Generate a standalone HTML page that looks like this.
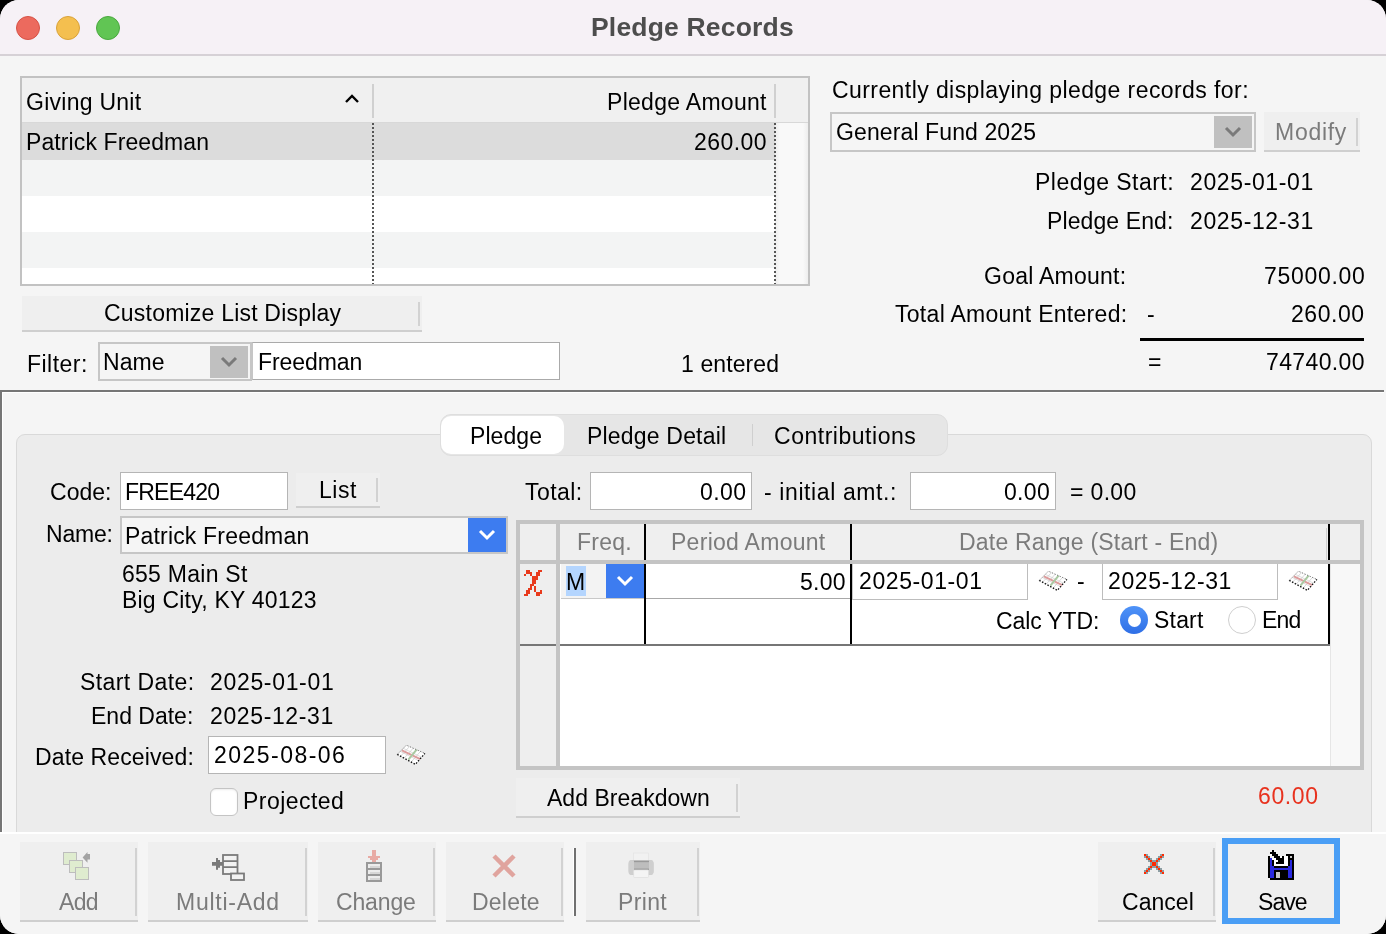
<!DOCTYPE html>
<html><head><meta charset="utf-8"><style>
html,body{margin:0;padding:0;}
body{width:1386px;height:934px;position:relative;overflow:hidden;background:#000;font-family:"Liberation Sans",sans-serif;color:#000;}
#win{position:absolute;left:0;top:0;width:1386px;height:934px;background:#f5f5f5;border-radius:19px;overflow:hidden;}
.t{position:absolute;font-size:23px;line-height:26px;white-space:nowrap;will-change:transform;}
</style></head><body>
<div id="win">
<div style="position:absolute;left:0px;top:0px;width:1386px;height:54px;background:#f6f1f6;"></div>
<div style="position:absolute;left:0px;top:54px;width:1386px;height:2px;background:#d6d1d6;"></div>
<div style="position:absolute;left:16px;top:16px;width:24px;height:24px;border-radius:50%;background:#ec6a5e;box-sizing:border-box;border:1px solid #d65246;"></div>
<div style="position:absolute;left:56px;top:16px;width:24px;height:24px;border-radius:50%;background:#f4bf4f;box-sizing:border-box;border:1px solid #d9a23a;"></div>
<div style="position:absolute;left:96px;top:16px;width:24px;height:24px;border-radius:50%;background:#61c554;box-sizing:border-box;border:1px solid #4aa83f;"></div>
<div class="t" style="top:13.5px;left:591.3px;letter-spacing:0.18px;color:#4d4d4d;font-size:26.5px;font-weight:bold;">Pledge Records</div>
<div style="position:absolute;left:20px;top:76px;width:790px;height:210px;box-sizing:border-box;border:2px solid #c2c2c2;background:#fff;"></div>
<div style="position:absolute;left:22px;top:78px;width:786px;height:45px;background:#f0f0f0;"></div>
<div style="position:absolute;left:22px;top:122px;width:786px;height:1px;background:#d8d8d8;"></div>
<div style="position:absolute;left:22px;top:123px;width:753px;height:37px;background:#dcdcdc;"></div>
<div style="position:absolute;left:22px;top:160px;width:753px;height:36px;background:#f3f4f4;"></div>
<div style="position:absolute;left:22px;top:196px;width:753px;height:36px;background:#ffffff;"></div>
<div style="position:absolute;left:22px;top:232px;width:753px;height:36px;background:#f3f4f4;"></div>
<div style="position:absolute;left:22px;top:268px;width:753px;height:16px;background:#ffffff;"></div>
<div style="position:absolute;left:775px;top:123px;width:33px;height:161px;background:linear-gradient(90deg,#ececec,#f9f9f9 5px,#f9f9f9 28px,#eeeeee);"></div>
<div style="position:absolute;left:372px;top:84px;width:2px;height:34px;background:#d0d0d0;"></div>
<div style="position:absolute;left:774px;top:84px;width:2px;height:34px;background:#d0d0d0;"></div>
<div style="position:absolute;left:372px;top:123px;width:2px;height:161px;background:repeating-linear-gradient(180deg,#555 0 2px,transparent 2px 4px);"></div>
<div style="position:absolute;left:774px;top:123px;width:2px;height:161px;background:repeating-linear-gradient(180deg,#555 0 2px,transparent 2px 4px);"></div>
<svg style="position:absolute;left:344px;top:93px" width="16" height="12"><path d="M2 9 L8 3 L14 9" fill="none" stroke="#000" stroke-width="2.4"/></svg>
<div class="t" style="top:89.0px;left:25.7px;letter-spacing:0.26px;">Giving Unit</div>
<div class="t" style="top:89.0px;left:607.2px;letter-spacing:0.29px;">Pledge Amount</div>
<div class="t" style="top:129.0px;left:25.8px;letter-spacing:0.10px;">Patrick Freedman</div>
<div class="t" style="top:129.0px;left:694.2px;letter-spacing:0.44px;">260.00</div>
<div style="position:absolute;left:22px;top:296px;width:400px;height:36px;background:#efefef;border-bottom:2px solid #cfcfcf;box-sizing:border-box;"></div>
<div style="position:absolute;left:418px;top:302px;width:2px;height:24px;background:#d2d2d2;"></div>
<div class="t" style="top:300.0px;left:103.5px;letter-spacing:0.21px;">Customize List Display</div>
<div class="t" style="top:351.0px;left:27.3px;letter-spacing:0.48px;">Filter:</div>
<div style="position:absolute;left:98px;top:342px;width:154px;height:39px;box-sizing:border-box;border:2px solid #c6c6c6;background:#f5f5f5;"></div>
<div style="position:absolute;left:210px;top:346px;width:38px;height:32px;background:#c0c0c0;"></div>
<svg style="position:absolute;left:220px;top:356px" width="18" height="12"><path d="M2 2 L9 9 L16 2" fill="none" stroke="#7a7a7a" stroke-width="3"/></svg>
<div class="t" style="top:349.0px;left:102.6px;letter-spacing:0.07px;">Name</div>
<div style="position:absolute;left:252px;top:342px;width:308px;height:38px;box-sizing:border-box;border:1px solid #aaaaaa;border-left-color:#c6c6c6;background:#fff;"></div>
<div class="t" style="top:348.9px;left:257.5px;letter-spacing:-0.07px;">Freedman</div>
<div class="t" style="top:351.0px;left:681.0px;letter-spacing:0.10px;">1 entered</div>
<div class="t" style="top:77.0px;left:832.0px;letter-spacing:0.42px;">Currently displaying pledge records for:</div>
<div style="position:absolute;left:830px;top:112px;width:426px;height:40px;box-sizing:border-box;border:2px solid #c6c6c6;background:#f5f5f5;"></div>
<div style="position:absolute;left:1214px;top:116px;width:38px;height:32px;background:#c0c0c0;"></div>
<svg style="position:absolute;left:1224px;top:126px" width="18" height="12"><path d="M2 2 L9 9 L16 2" fill="none" stroke="#7a7a7a" stroke-width="3"/></svg>
<div class="t" style="top:118.6px;left:835.9px;letter-spacing:0.11px;">General Fund 2025</div>
<div style="position:absolute;left:1264px;top:112px;width:96px;height:40px;background:#efefef;border-bottom:2px solid #cfcfcf;box-sizing:border-box;"></div>
<div style="position:absolute;left:1356px;top:118px;width:2px;height:28px;background:#d2d2d2;"></div>
<div class="t" style="top:119.0px;left:1275.0px;letter-spacing:0.72px;color:#7b7b7b;">Modify</div>
<div class="t" style="top:168.8px;left:1035.4px;letter-spacing:0.47px;">Pledge Start:</div>
<div class="t" style="top:168.8px;left:1190.0px;letter-spacing:0.62px;">2025-01-01</div>
<div class="t" style="top:208.4px;left:1047.0px;letter-spacing:0.10px;">Pledge End:</div>
<div class="t" style="top:208.4px;left:1190.0px;letter-spacing:0.62px;">2025-12-31</div>
<div class="t" style="top:263.0px;left:984.0px;letter-spacing:0.25px;">Goal Amount:</div>
<div class="t" style="top:262.6px;left:1263.8px;letter-spacing:0.69px;">75000.00</div>
<div class="t" style="top:300.6px;left:895.0px;letter-spacing:0.29px;">Total Amount Entered:</div>
<div class="t" style="top:300.6px;left:1146.5px;">-</div>
<div class="t" style="top:300.5px;left:1290.6px;letter-spacing:0.54px;">260.00</div>
<div style="position:absolute;left:1140px;top:338px;width:224px;height:2.5px;background:#000;"></div>
<div class="t" style="top:348.5px;left:1147.5px;">=</div>
<div class="t" style="top:348.5px;left:1265.7px;letter-spacing:0.37px;">74740.00</div>
<div style="position:absolute;left:0px;top:390px;width:1384px;height:442px;background:#f5f5f5;"></div>
<div style="position:absolute;left:0px;top:390px;width:1384px;height:2px;background:#767676;"></div>
<div style="position:absolute;left:0px;top:390px;width:2px;height:442px;background:#767676;"></div>
<div style="position:absolute;left:2px;top:392px;width:1382px;height:1px;background:#fff;"></div>
<div style="position:absolute;left:2px;top:392px;width:1px;height:440px;background:#fff;"></div>
<div style="position:absolute;left:16px;top:434px;width:1356px;height:420px;box-sizing:border-box;border:1px solid #d9d9d9;border-radius:9px;background:#ececec;"></div>
<div style="position:absolute;left:0px;top:832px;width:1386px;height:2px;background:#ffffff;"></div>
<div style="position:absolute;left:440px;top:414px;width:508px;height:42px;box-sizing:border-box;border:1px solid #dedede;border-radius:11px;background:#e6e6e6;"></div>
<div style="position:absolute;left:441px;top:416px;width:123px;height:38px;border-radius:10px;background:#ffffff;"></div>
<div style="position:absolute;left:751.5px;top:424px;width:1.5px;height:22px;background:#cfcfcf;"></div>
<div class="t" style="top:422.8px;left:469.7px;letter-spacing:0.06px;">Pledge</div>
<div class="t" style="top:423.0px;left:586.9px;letter-spacing:0.19px;">Pledge Detail</div>
<div class="t" style="top:423.0px;left:774.0px;letter-spacing:0.52px;">Contributions</div>
<div class="t" style="top:478.7px;left:49.9px;letter-spacing:0.03px;">Code:</div>
<div style="position:absolute;left:120px;top:472px;width:168px;height:38px;box-sizing:border-box;border:1px solid #b5b5b5;background:#fff;"></div>
<div class="t" style="top:479.0px;left:125.3px;letter-spacing:-0.78px;">FREE420</div>
<div style="position:absolute;left:296px;top:473px;width:84px;height:35px;background:#efefef;border-bottom:2px solid #cfcfcf;box-sizing:border-box;"></div>
<div style="position:absolute;left:376px;top:478px;width:2px;height:24px;background:#d2d2d2;"></div>
<div class="t" style="top:476.9px;left:319.4px;letter-spacing:0.53px;">List</div>
<div class="t" style="top:521.3px;left:45.6px;letter-spacing:-0.20px;">Name:</div>
<div style="position:absolute;left:120px;top:516px;width:388px;height:38px;box-sizing:border-box;border:2px solid #c6c6c6;background:#f5f5f5;"></div>
<div style="position:absolute;left:468px;top:518px;width:38px;height:34px;background:#3d7cf0;"></div>
<svg style="position:absolute;left:478px;top:528px" width="18" height="13"><path d="M2 3 L9 10 L16 3" fill="none" stroke="#fff" stroke-width="3"/></svg>
<div class="t" style="top:522.5px;left:125.3px;letter-spacing:0.18px;">Patrick Freedman</div>
<div class="t" style="top:560.7px;left:121.7px;letter-spacing:0.26px;">655 Main St</div>
<div class="t" style="top:586.9px;left:121.5px;letter-spacing:0.21px;">Big City, KY 40123</div>
<div class="t" style="top:668.6px;left:79.9px;letter-spacing:0.41px;">Start Date:</div>
<div class="t" style="top:668.6px;left:210.0px;letter-spacing:0.67px;">2025-01-01</div>
<div class="t" style="top:702.6px;left:91.0px;">End Date:</div>
<div class="t" style="top:702.6px;left:210.0px;letter-spacing:0.62px;">2025-12-31</div>
<div class="t" style="top:744.0px;left:35.4px;letter-spacing:0.12px;">Date Received:</div>
<div style="position:absolute;left:208px;top:736px;width:178px;height:38px;box-sizing:border-box;border:1px solid #b5b5b5;background:#fff;"></div>
<div class="t" style="top:742.0px;left:214.0px;letter-spacing:1.47px;">2025-08-06</div>
<svg style="position:absolute;left:392px;top:738px" width="40" height="32" viewBox="0 0 40 32"><polygon points="5.3,16.4 14.4,7.2 32.9,15.4 23.3,26.4" fill="#fff"/><path d="M8.3,13.4 L26.6,22.6 M11.3,10.3 L29.6,19.2" stroke="#d0d0d0" stroke-width="0.7"/><path d="M17.5,8.6 L8.6,18.2 M21.2,10.2 L12.2,20.2 M28.5,13.4 L19.2,24" stroke="#c8c8c8" stroke-width="0.7"/><path d="M9.9,12.3 L28.3,21.2" stroke="#dc9c9c" stroke-width="2"/><path d="M24.6,11.7 L16.4,21.6" stroke="#a9c9a2" stroke-width="2"/><path d="M5.3,16.4 L14.4,7.2 L32.9,15.4" fill="none" stroke="#666" stroke-width="0.9" stroke-dasharray="1.3 1.5"/><path d="M5.3,16.4 L23.3,26.4 L32.9,15.4" fill="none" stroke="#111" stroke-width="1.3" stroke-dasharray="1.5 1.6"/></svg>
<div style="position:absolute;left:210px;top:788px;width:28px;height:28px;box-sizing:border-box;border:1px solid #c4c4c4;border-radius:6px;background:#fff;box-shadow:inset 0 1px 2px rgba(0,0,0,0.08);"></div>
<div class="t" style="top:788.4px;left:243.4px;letter-spacing:0.45px;">Projected</div>
<div class="t" style="top:478.6px;left:524.9px;letter-spacing:0.42px;">Total:</div>
<div style="position:absolute;left:590px;top:472px;width:162px;height:38px;box-sizing:border-box;border:1px solid #b5b5b5;background:#fff;"></div>
<div class="t" style="top:478.6px;left:699.8px;letter-spacing:0.40px;">0.00</div>
<div class="t" style="top:478.6px;left:763.8px;letter-spacing:0.61px;">- initial amt.:</div>
<div style="position:absolute;left:910px;top:472px;width:146px;height:38px;box-sizing:border-box;border:1px solid #b5b5b5;background:#fff;"></div>
<div class="t" style="top:478.6px;left:1004.0px;letter-spacing:0.33px;">0.00</div>
<div class="t" style="top:478.6px;left:1069.7px;letter-spacing:0.34px;">= 0.00</div>
<div style="position:absolute;left:516px;top:520px;width:848px;height:250px;box-sizing:border-box;border:4px solid #c4c4c4;background:#fff;"></div>
<div style="position:absolute;left:520px;top:524px;width:36px;height:242px;background:#eeeeee;"></div>
<div style="position:absolute;left:556px;top:524px;width:4px;height:242px;background:#c4c4c4;"></div>
<div style="position:absolute;left:560px;top:524px;width:800px;height:36px;background:#efefef;"></div>
<div style="position:absolute;left:1330px;top:564px;width:30px;height:202px;background:#f8f8f8;border-left:1px solid #e6e6e6;box-sizing:border-box;"></div>
<div style="position:absolute;left:644px;top:524px;width:2px;height:122px;background:#000;"></div>
<div style="position:absolute;left:850px;top:524px;width:2px;height:122px;background:#000;"></div>
<div style="position:absolute;left:1328px;top:524px;width:2px;height:122px;background:#000;"></div>
<div style="position:absolute;left:1326px;top:528px;width:1px;height:32px;background:#cfcfcf;"></div>
<div style="position:absolute;left:520px;top:644px;width:810px;height:2px;background:#767676;"></div>
<div style="position:absolute;left:556px;top:524px;width:4px;height:242px;background:#c4c4c4;"></div>
<div style="position:absolute;left:520px;top:560px;width:840px;height:4px;background:#c4c4c4;"></div>
<div class="t" style="top:528.8px;left:577.3px;letter-spacing:0.23px;color:#7b7b7b;">Freq.</div>
<div class="t" style="top:528.6px;left:671.2px;letter-spacing:0.28px;color:#7b7b7b;">Period Amount</div>
<div class="t" style="top:528.6px;left:959.2px;letter-spacing:0.21px;color:#7b7b7b;">Date Range (Start - End)</div>
<svg style="position:absolute;left:524px;top:570px" width="18" height="26" shape-rendering="crispEdges" fill="#e83a1c"><rect x="2" y="0" width="2" height="2"/><rect x="4" y="0" width="2" height="2"/><rect x="14" y="0" width="2" height="2"/><rect x="16" y="0" width="2" height="2"/><rect x="2" y="2" width="2" height="2"/><rect x="4" y="2" width="2" height="2"/><rect x="6" y="2" width="2" height="2"/><rect x="12" y="2" width="2" height="2"/><rect x="14" y="2" width="2" height="2"/><rect x="0" y="4" width="2" height="2"/><rect x="6" y="4" width="2" height="2"/><rect x="12" y="4" width="2" height="2"/><rect x="14" y="4" width="2" height="2"/><rect x="8" y="6" width="2" height="2"/><rect x="10" y="6" width="2" height="2"/><rect x="12" y="6" width="2" height="2"/><rect x="8" y="8" width="2" height="2"/><rect x="10" y="8" width="2" height="2"/><rect x="12" y="8" width="2" height="2"/><rect x="8" y="10" width="2" height="2"/><rect x="10" y="10" width="2" height="2"/><rect x="8" y="12" width="2" height="2"/><rect x="10" y="12" width="2" height="2"/><rect x="6" y="14" width="2" height="2"/><rect x="8" y="14" width="2" height="2"/><rect x="6" y="16" width="2" height="2"/><rect x="10" y="16" width="2" height="2"/><rect x="4" y="18" width="2" height="2"/><rect x="6" y="18" width="2" height="2"/><rect x="10" y="18" width="2" height="2"/><rect x="2" y="20" width="2" height="2"/><rect x="4" y="20" width="2" height="2"/><rect x="10" y="20" width="2" height="2"/><rect x="16" y="20" width="2" height="2"/><rect x="2" y="22" width="2" height="2"/><rect x="4" y="22" width="2" height="2"/><rect x="12" y="22" width="2" height="2"/><rect x="14" y="22" width="2" height="2"/><rect x="16" y="22" width="2" height="2"/><rect x="0" y="24" width="2" height="2"/><rect x="2" y="24" width="2" height="2"/><rect x="12" y="24" width="2" height="2"/><rect x="14" y="24" width="2" height="2"/></svg>
<div style="position:absolute;left:561px;top:564px;width:83px;height:35px;background:#f3f3f3;border-bottom:1px solid #c8c8c8;box-sizing:border-box;"></div>
<div style="position:absolute;left:606px;top:564px;width:38px;height:34px;background:#3d7cf0;"></div>
<svg style="position:absolute;left:616px;top:574px" width="18" height="13"><path d="M2 3 L9 10 L16 3" fill="none" stroke="#fff" stroke-width="3"/></svg>
<div style="position:absolute;left:566px;top:566px;width:20px;height:30px;background:#b4d5fe;"></div>
<div class="t" style="top:568.5px;left:565.7px;">M</div>
<div style="position:absolute;left:646px;top:598px;width:204px;height:1px;background:#a8a8a8;"></div>
<div class="t" style="top:568.5px;left:800.0px;letter-spacing:0.27px;">5.00</div>
<div style="position:absolute;left:852px;top:564px;width:176px;height:36px;box-sizing:border-box;border:1px solid #bdbdbd;border-top:none;border-left-color:#c8c8c8;background:#fff;"></div>
<div class="t" style="top:568.3px;left:858.6px;letter-spacing:0.60px;">2025-01-01</div>
<svg style="position:absolute;left:1034px;top:564px" width="40" height="32" viewBox="0 0 40 32"><polygon points="5.3,16.4 14.4,7.2 32.9,15.4 23.3,26.4" fill="#fff"/><path d="M8.3,13.4 L26.6,22.6 M11.3,10.3 L29.6,19.2" stroke="#d0d0d0" stroke-width="0.7"/><path d="M17.5,8.6 L8.6,18.2 M21.2,10.2 L12.2,20.2 M28.5,13.4 L19.2,24" stroke="#c8c8c8" stroke-width="0.7"/><path d="M9.9,12.3 L28.3,21.2" stroke="#dc9c9c" stroke-width="2"/><path d="M24.6,11.7 L16.4,21.6" stroke="#a9c9a2" stroke-width="2"/><path d="M5.3,16.4 L14.4,7.2 L32.9,15.4" fill="none" stroke="#666" stroke-width="0.9" stroke-dasharray="1.3 1.5"/><path d="M5.3,16.4 L23.3,26.4 L32.9,15.4" fill="none" stroke="#111" stroke-width="1.3" stroke-dasharray="1.5 1.6"/></svg>
<div class="t" style="top:568.3px;left:1076.6px;">-</div>
<div style="position:absolute;left:1102px;top:564px;width:176px;height:36px;box-sizing:border-box;border:1px solid #bdbdbd;border-top:none;background:#fff;"></div>
<div class="t" style="top:568.3px;left:1108.0px;letter-spacing:0.64px;">2025-12-31</div>
<svg style="position:absolute;left:1284px;top:564px" width="40" height="32" viewBox="0 0 40 32"><polygon points="5.3,16.4 14.4,7.2 32.9,15.4 23.3,26.4" fill="#fff"/><path d="M8.3,13.4 L26.6,22.6 M11.3,10.3 L29.6,19.2" stroke="#d0d0d0" stroke-width="0.7"/><path d="M17.5,8.6 L8.6,18.2 M21.2,10.2 L12.2,20.2 M28.5,13.4 L19.2,24" stroke="#c8c8c8" stroke-width="0.7"/><path d="M9.9,12.3 L28.3,21.2" stroke="#dc9c9c" stroke-width="2"/><path d="M24.6,11.7 L16.4,21.6" stroke="#a9c9a2" stroke-width="2"/><path d="M5.3,16.4 L14.4,7.2 L32.9,15.4" fill="none" stroke="#666" stroke-width="0.9" stroke-dasharray="1.3 1.5"/><path d="M5.3,16.4 L23.3,26.4 L32.9,15.4" fill="none" stroke="#111" stroke-width="1.3" stroke-dasharray="1.5 1.6"/></svg>
<div class="t" style="top:608.1px;left:996.3px;letter-spacing:-0.12px;">Calc YTD:</div>
<div style="position:absolute;left:1120px;top:606px;width:28px;height:28px;border-radius:50%;background:linear-gradient(180deg,#4f93f8,#2f6fe6);"></div>
<div style="position:absolute;left:1127.5px;top:613.5px;width:13px;height:13px;border-radius:50%;background:#fff;"></div>
<div class="t" style="top:607.0px;left:1154.2px;letter-spacing:0.20px;">Start</div>
<div style="position:absolute;left:1228px;top:606px;width:28px;height:28px;border-radius:50%;background:#fff;box-sizing:border-box;border:1px solid #cfcfcf;"></div>
<div class="t" style="top:607.0px;left:1261.7px;letter-spacing:-0.85px;">End</div>
<div style="position:absolute;left:516px;top:778px;width:224px;height:40px;background:#efefef;border-bottom:2px solid #cfcfcf;box-sizing:border-box;"></div>
<div style="position:absolute;left:736px;top:784px;width:2px;height:28px;background:#d2d2d2;"></div>
<div class="t" style="top:784.7px;left:547.2px;letter-spacing:0.03px;">Add Breakdown</div>
<div class="t" style="top:783.2px;left:1258.1px;letter-spacing:0.62px;color:#e8321e;">60.00</div>
<div style="position:absolute;left:0px;top:834px;width:1386px;height:100px;background:#f5f5f5;"></div>
<div style="position:absolute;left:20px;top:842px;width:118px;height:80px;background:#efefef;border-bottom:2px solid #cfcfcf;box-sizing:border-box;"></div>
<div style="position:absolute;left:135px;top:848px;width:2px;height:68px;background:#d2d2d2;"></div>
<div style="position:absolute;left:148px;top:842px;width:160px;height:80px;background:#efefef;border-bottom:2px solid #cfcfcf;box-sizing:border-box;"></div>
<div style="position:absolute;left:305px;top:848px;width:2px;height:68px;background:#d2d2d2;"></div>
<div style="position:absolute;left:318px;top:842px;width:118px;height:80px;background:#efefef;border-bottom:2px solid #cfcfcf;box-sizing:border-box;"></div>
<div style="position:absolute;left:433px;top:848px;width:2px;height:68px;background:#d2d2d2;"></div>
<div style="position:absolute;left:446px;top:842px;width:118px;height:80px;background:#efefef;border-bottom:2px solid #cfcfcf;box-sizing:border-box;"></div>
<div style="position:absolute;left:561px;top:848px;width:2px;height:68px;background:#d2d2d2;"></div>
<div style="position:absolute;left:586px;top:842px;width:114px;height:80px;background:#efefef;border-bottom:2px solid #cfcfcf;box-sizing:border-box;"></div>
<div style="position:absolute;left:697px;top:848px;width:2px;height:68px;background:#d2d2d2;"></div>
<div style="position:absolute;left:1098px;top:842px;width:118px;height:80px;background:#efefef;border-bottom:2px solid #cfcfcf;box-sizing:border-box;"></div>
<div style="position:absolute;left:1213px;top:848px;width:2px;height:68px;background:#d2d2d2;"></div>
<div style="position:absolute;left:573px;top:848px;width:1px;height:68px;background:#fff;"></div>
<div style="position:absolute;left:574px;top:848px;width:2px;height:68px;background:#707070;"></div>
<div style="position:absolute;left:1222px;top:838px;width:118px;height:86px;box-sizing:border-box;border:6px solid #4a9ef5;background:#efefef;"></div>
<div class="t" style="top:888.6px;left:59.0px;letter-spacing:-0.65px;color:#7b7b7b;">Add</div>
<div class="t" style="top:889.0px;left:175.7px;letter-spacing:0.75px;color:#7b7b7b;">Multi-Add</div>
<div class="t" style="top:889.0px;left:336.0px;letter-spacing:-0.14px;color:#7b7b7b;">Change</div>
<div class="t" style="top:889.0px;left:471.6px;letter-spacing:0.22px;color:#7b7b7b;">Delete</div>
<div class="t" style="top:889.0px;left:617.6px;letter-spacing:0.35px;color:#7b7b7b;">Print</div>
<div class="t" style="top:888.8px;left:1122.0px;letter-spacing:0.04px;">Cancel</div>
<div class="t" style="top:888.6px;left:1258.0px;letter-spacing:-0.93px;">Save</div>
<svg style="position:absolute;left:60px;top:850px" width="34" height="34" viewBox="0 0 34 34"><rect x="3.5" y="2.5" width="13" height="12" fill="#dfeccf" stroke="#bdbdbd"/><rect x="9.5" y="10.5" width="13" height="12" fill="#dfeccf" stroke="#bdbdbd"/><rect x="15.5" y="17.5" width="13" height="12" fill="#dfeccf" stroke="#bdbdbd"/><path d="M22.6 7.4 L27.5 2.1 L27.5 4.1 L30 4.1 L30 9.6 L27.5 9.6 L27.5 12.7 Z" fill="#a3a3a3"/></svg>
<svg style="position:absolute;left:210px;top:852px" width="36" height="30" viewBox="0 0 36 30"><rect x="13" y="3" width="14.5" height="19" fill="#f2f2f2" stroke="#7a7a7a" stroke-width="1.8"/><path d="M13 9.2 H27.5 M13 15.2 H27.5" stroke="#7a7a7a" stroke-width="1.8"/><rect x="21" y="21.5" width="13" height="6.5" fill="#f2f2f2" stroke="#7a7a7a" stroke-width="1.8"/><path d="M2 10 H6 V6 H8 V8 H10 V10 H13 V13.8 H10 V15.8 H8 V17.8 H6 V13.8 H2 Z" fill="#7a7a7a"/></svg>
<svg style="position:absolute;left:364px;top:848px" width="20" height="36" viewBox="0 0 20 36" shape-rendering="crispEdges"><rect x="2" y="14" width="16" height="20" fill="#999"/><rect x="4" y="16" width="12" height="4" fill="#ececec"/><rect x="6" y="18" width="10" height="2" fill="#d6d6d6"/><rect x="4" y="22" width="12" height="4" fill="#ececec"/><rect x="6" y="24" width="10" height="2" fill="#d6d6d6"/><rect x="4" y="28" width="12" height="4" fill="#ececec"/><rect x="6" y="30" width="10" height="2" fill="#d6d6d6"/><rect x="8" y="2" width="4" height="12" fill="#e8aaa4"/><rect x="4" y="8" width="12" height="2" fill="#e8aaa4"/><rect x="6" y="10" width="8" height="2" fill="#e8aaa4"/></svg>
<svg style="position:absolute;left:490px;top:852px" width="28" height="28" viewBox="0 0 28 28"><path d="M4 4 L24 24 M24 4 L4 24" stroke="#e0a49e" stroke-width="4.5"/></svg>
<svg style="position:absolute;left:626px;top:850px" width="30" height="30" viewBox="0 0 30 30"><rect x="7.6" y="3" width="15" height="8.5" fill="#f1f1f1" stroke="#e2e2e2" stroke-width="0.6"/><rect x="2.6" y="10" width="25" height="15" rx="4" fill="#c9c9c9"/><rect x="2.6" y="10" width="5.5" height="15" rx="3" fill="#cfcfcf"/><rect x="22" y="10" width="5.5" height="15" rx="3" fill="#cfcfcf"/><rect x="8" y="10.8" width="15" height="1.7" fill="#9a9a9a"/><rect x="8" y="12.5" width="15" height="5.9" fill="#bdbdbd"/><rect x="8" y="18.4" width="15" height="1.6" fill="#a0a0a0"/><rect x="7.6" y="20" width="15" height="7.5" rx="1" fill="#f4f4f4" stroke="#dcdcdc" stroke-width="0.6"/></svg>
<svg style="position:absolute;left:1144px;top:854px" width="20" height="20" shape-rendering="crispEdges"><rect x="6" y="8" width="2" height="2" fill="#8d9ea3"/><rect x="8" y="6" width="2" height="2" fill="#8d9ea3"/><rect x="6" y="14" width="2" height="2" fill="#8d9ea3"/><rect x="8" y="12" width="2" height="2" fill="#8d9ea3"/><rect x="16" y="0" width="2" height="2" fill="#8d9ea3"/><rect x="16" y="18" width="2" height="2" fill="#8d9ea3"/><rect x="18" y="16" width="2" height="2" fill="#8d9ea3"/><rect x="2" y="0" width="2" height="2" fill="#8d9ea3"/><rect x="0" y="16" width="2" height="2" fill="#8d9ea3"/><rect x="2" y="18" width="2" height="2" fill="#8d9ea3"/><rect x="4" y="16" width="2" height="2" fill="#8d9ea3"/><rect x="12" y="4" width="2" height="2" fill="#8d9ea3"/><rect x="14" y="2" width="2" height="2" fill="#8d9ea3"/><rect x="12" y="10" width="2" height="2" fill="#8d9ea3"/><rect x="10" y="12" width="2" height="2" fill="#8d9ea3"/><rect x="10" y="6" width="2" height="2" fill="#8d9ea3"/><rect x="16" y="4" width="2" height="2" fill="#8d9ea3"/><rect x="18" y="2" width="2" height="2" fill="#8d9ea3"/><rect x="0" y="2" width="2" height="2" fill="#8d9ea3"/><rect x="2" y="4" width="2" height="2" fill="#8d9ea3"/><rect x="4" y="2" width="2" height="2" fill="#8d9ea3"/><rect x="12" y="8" width="2" height="2" fill="#8d9ea3"/><rect x="14" y="6" width="2" height="2" fill="#8d9ea3"/><rect x="12" y="14" width="2" height="2" fill="#8d9ea3"/><rect x="14" y="12" width="2" height="2" fill="#8d9ea3"/><rect x="6" y="4" width="2" height="2" fill="#8d9ea3"/><rect x="6" y="10" width="2" height="2" fill="#8d9ea3"/><rect x="16" y="14" width="2" height="2" fill="#8d9ea3"/><rect x="4" y="6" width="2" height="2" fill="#8d9ea3"/><rect x="2" y="14" width="2" height="2" fill="#8d9ea3"/><rect x="4" y="12" width="2" height="2" fill="#8d9ea3"/><rect x="14" y="16" width="2" height="2" fill="#8d9ea3"/><rect x="0" y="0" width="2" height="2" fill="#ff2a00"/><rect x="18" y="0" width="2" height="2" fill="#ff2a00"/><rect x="0" y="18" width="2" height="2" fill="#ff2a00"/><rect x="18" y="18" width="2" height="2" fill="#ff2a00"/><rect x="2" y="2" width="2" height="2" fill="#ff2a00"/><rect x="16" y="2" width="2" height="2" fill="#ff2a00"/><rect x="2" y="16" width="2" height="2" fill="#ff2a00"/><rect x="16" y="16" width="2" height="2" fill="#ff2a00"/><rect x="4" y="4" width="2" height="2" fill="#ff2a00"/><rect x="14" y="4" width="2" height="2" fill="#ff2a00"/><rect x="4" y="14" width="2" height="2" fill="#ff2a00"/><rect x="14" y="14" width="2" height="2" fill="#ff2a00"/><rect x="6" y="6" width="2" height="2" fill="#ff2a00"/><rect x="12" y="6" width="2" height="2" fill="#ff2a00"/><rect x="6" y="12" width="2" height="2" fill="#ff2a00"/><rect x="12" y="12" width="2" height="2" fill="#ff2a00"/><rect x="8" y="8" width="2" height="2" fill="#ff2a00"/><rect x="10" y="8" width="2" height="2" fill="#ff2a00"/><rect x="8" y="10" width="2" height="2" fill="#ff2a00"/><rect x="10" y="10" width="2" height="2" fill="#ff2a00"/></svg>
<svg style="position:absolute;left:1266px;top:850px" width="28" height="30" shape-rendering="crispEdges"><rect x="2" y="6" width="2" height="2" fill="#000"/><rect x="2" y="8" width="2" height="2" fill="#000"/><rect x="2" y="10" width="2" height="2" fill="#000"/><rect x="2" y="12" width="2" height="2" fill="#000"/><rect x="2" y="14" width="2" height="2" fill="#000"/><rect x="2" y="16" width="2" height="2" fill="#000"/><rect x="2" y="18" width="2" height="2" fill="#000"/><rect x="2" y="20" width="2" height="2" fill="#000"/><rect x="2" y="22" width="2" height="2" fill="#000"/><rect x="2" y="24" width="2" height="2" fill="#000"/><rect x="2" y="26" width="2" height="2" fill="#000"/><rect x="4" y="8" width="2" height="2" fill="#2a2ae0"/><rect x="4" y="10" width="2" height="2" fill="#2a2ae0"/><rect x="4" y="12" width="2" height="2" fill="#2a2ae0"/><rect x="4" y="14" width="2" height="2" fill="#2a2ae0"/><rect x="4" y="16" width="2" height="2" fill="#2a2ae0"/><rect x="4" y="18" width="2" height="2" fill="#2a2ae0"/><rect x="4" y="20" width="2" height="2" fill="#2a2ae0"/><rect x="4" y="22" width="2" height="2" fill="#2a2ae0"/><rect x="4" y="24" width="2" height="2" fill="#2a2ae0"/><rect x="4" y="26" width="2" height="2" fill="#2a2ae0"/><rect x="6" y="16" width="2" height="2" fill="#2a2ae0"/><rect x="6" y="18" width="2" height="2" fill="#2a2ae0"/><rect x="6" y="20" width="2" height="2" fill="#2a2ae0"/><rect x="6" y="22" width="2" height="2" fill="#2a2ae0"/><rect x="6" y="24" width="2" height="2" fill="#2a2ae0"/><rect x="6" y="26" width="2" height="2" fill="#2a2ae0"/><rect x="6" y="10" width="2" height="2" fill="#000"/><rect x="6" y="12" width="2" height="2" fill="#000"/><rect x="6" y="14" width="2" height="2" fill="#000"/><rect x="6" y="8" width="2" height="2" fill="#fff"/><rect x="4" y="28" width="2" height="2" fill="#000"/><rect x="6" y="28" width="2" height="2" fill="#000"/><rect x="8" y="28" width="2" height="2" fill="#000"/><rect x="10" y="28" width="2" height="2" fill="#000"/><rect x="12" y="28" width="2" height="2" fill="#000"/><rect x="14" y="28" width="2" height="2" fill="#000"/><rect x="16" y="28" width="2" height="2" fill="#000"/><rect x="18" y="28" width="2" height="2" fill="#000"/><rect x="20" y="28" width="2" height="2" fill="#000"/><rect x="22" y="28" width="2" height="2" fill="#000"/><rect x="24" y="28" width="2" height="2" fill="#000"/><rect x="26" y="28" width="2" height="2" fill="#000"/><rect x="26" y="4" width="2" height="2" fill="#000"/><rect x="26" y="6" width="2" height="2" fill="#000"/><rect x="26" y="8" width="2" height="2" fill="#000"/><rect x="26" y="10" width="2" height="2" fill="#000"/><rect x="26" y="12" width="2" height="2" fill="#000"/><rect x="26" y="14" width="2" height="2" fill="#000"/><rect x="26" y="16" width="2" height="2" fill="#000"/><rect x="26" y="18" width="2" height="2" fill="#000"/><rect x="26" y="20" width="2" height="2" fill="#000"/><rect x="26" y="22" width="2" height="2" fill="#000"/><rect x="26" y="24" width="2" height="2" fill="#000"/><rect x="26" y="26" width="2" height="2" fill="#000"/><rect x="22" y="10" width="2" height="2" fill="#000"/><rect x="24" y="10" width="2" height="2" fill="#2a2ae0"/><rect x="22" y="12" width="2" height="2" fill="#000"/><rect x="24" y="12" width="2" height="2" fill="#2a2ae0"/><rect x="22" y="14" width="2" height="2" fill="#000"/><rect x="24" y="14" width="2" height="2" fill="#2a2ae0"/><rect x="22" y="16" width="2" height="2" fill="#2a2ae0"/><rect x="24" y="16" width="2" height="2" fill="#2a2ae0"/><rect x="22" y="18" width="2" height="2" fill="#2a2ae0"/><rect x="24" y="18" width="2" height="2" fill="#2a2ae0"/><rect x="22" y="20" width="2" height="2" fill="#2a2ae0"/><rect x="24" y="20" width="2" height="2" fill="#2a2ae0"/><rect x="22" y="22" width="2" height="2" fill="#2a2ae0"/><rect x="24" y="22" width="2" height="2" fill="#2a2ae0"/><rect x="22" y="24" width="2" height="2" fill="#2a2ae0"/><rect x="24" y="24" width="2" height="2" fill="#2a2ae0"/><rect x="22" y="26" width="2" height="2" fill="#2a2ae0"/><rect x="24" y="26" width="2" height="2" fill="#2a2ae0"/><rect x="20" y="4" width="2" height="2" fill="#000"/><rect x="22" y="4" width="2" height="2" fill="#000"/><rect x="24" y="4" width="2" height="2" fill="#000"/><rect x="22" y="6" width="2" height="2" fill="#000"/><rect x="22" y="8" width="2" height="2" fill="#000"/><rect x="24" y="6" width="2" height="2" fill="#c8c8c8"/><rect x="24" y="8" width="2" height="2" fill="#000"/><rect x="8" y="6" width="2" height="2" fill="#000"/><rect x="8" y="8" width="2" height="2" fill="#fff"/><rect x="8" y="10" width="2" height="2" fill="#fff"/><rect x="8" y="12" width="2" height="2" fill="#fff"/><rect x="8" y="14" width="2" height="2" fill="#fff"/><rect x="10" y="6" width="2" height="2" fill="#000"/><rect x="10" y="8" width="2" height="2" fill="#000"/><rect x="10" y="10" width="2" height="2" fill="#fff"/><rect x="10" y="12" width="2" height="2" fill="#000"/><rect x="10" y="14" width="2" height="2" fill="#fff"/><rect x="12" y="6" width="2" height="2" fill="#000"/><rect x="12" y="8" width="2" height="2" fill="#000"/><rect x="12" y="10" width="2" height="2" fill="#000"/><rect x="12" y="12" width="2" height="2" fill="#000"/><rect x="12" y="14" width="2" height="2" fill="#fff"/><rect x="14" y="6" width="2" height="2" fill="#fff"/><rect x="14" y="8" width="2" height="2" fill="#000"/><rect x="14" y="10" width="2" height="2" fill="#000"/><rect x="14" y="12" width="2" height="2" fill="#000"/><rect x="14" y="14" width="2" height="2" fill="#fff"/><rect x="16" y="6" width="2" height="2" fill="#000"/><rect x="16" y="8" width="2" height="2" fill="#000"/><rect x="16" y="10" width="2" height="2" fill="#000"/><rect x="16" y="12" width="2" height="2" fill="#000"/><rect x="16" y="14" width="2" height="2" fill="#fff"/><rect x="18" y="6" width="2" height="2" fill="#fff"/><rect x="18" y="8" width="2" height="2" fill="#fff"/><rect x="18" y="10" width="2" height="2" fill="#fff"/><rect x="18" y="12" width="2" height="2" fill="#fff"/><rect x="18" y="14" width="2" height="2" fill="#fff"/><rect x="20" y="6" width="2" height="2" fill="#fff"/><rect x="20" y="8" width="2" height="2" fill="#fff"/><rect x="20" y="10" width="2" height="2" fill="#fff"/><rect x="20" y="12" width="2" height="2" fill="#fff"/><rect x="20" y="14" width="2" height="2" fill="#fff"/><rect x="8" y="16" width="2" height="2" fill="#000"/><rect x="8" y="18" width="2" height="2" fill="#2a2ae0"/><rect x="8" y="20" width="2" height="2" fill="#000"/><rect x="8" y="22" width="2" height="2" fill="#000"/><rect x="8" y="24" width="2" height="2" fill="#000"/><rect x="8" y="26" width="2" height="2" fill="#000"/><rect x="10" y="16" width="2" height="2" fill="#000"/><rect x="10" y="18" width="2" height="2" fill="#2a2ae0"/><rect x="10" y="20" width="2" height="2" fill="#000"/><rect x="10" y="22" width="2" height="2" fill="#c8c8c8"/><rect x="10" y="24" width="2" height="2" fill="#c8c8c8"/><rect x="10" y="26" width="2" height="2" fill="#c8c8c8"/><rect x="12" y="16" width="2" height="2" fill="#000"/><rect x="12" y="18" width="2" height="2" fill="#2a2ae0"/><rect x="12" y="20" width="2" height="2" fill="#000"/><rect x="12" y="22" width="2" height="2" fill="#c8c8c8"/><rect x="12" y="24" width="2" height="2" fill="#c8c8c8"/><rect x="12" y="26" width="2" height="2" fill="#c8c8c8"/><rect x="14" y="16" width="2" height="2" fill="#000"/><rect x="14" y="18" width="2" height="2" fill="#2a2ae0"/><rect x="14" y="20" width="2" height="2" fill="#000"/><rect x="14" y="22" width="2" height="2" fill="#000"/><rect x="14" y="24" width="2" height="2" fill="#000"/><rect x="14" y="26" width="2" height="2" fill="#000"/><rect x="16" y="16" width="2" height="2" fill="#000"/><rect x="16" y="18" width="2" height="2" fill="#2a2ae0"/><rect x="16" y="20" width="2" height="2" fill="#000"/><rect x="16" y="22" width="2" height="2" fill="#000"/><rect x="16" y="24" width="2" height="2" fill="#000"/><rect x="16" y="26" width="2" height="2" fill="#000"/><rect x="18" y="16" width="2" height="2" fill="#000"/><rect x="18" y="18" width="2" height="2" fill="#2a2ae0"/><rect x="18" y="20" width="2" height="2" fill="#000"/><rect x="18" y="22" width="2" height="2" fill="#000"/><rect x="18" y="24" width="2" height="2" fill="#000"/><rect x="18" y="26" width="2" height="2" fill="#000"/><rect x="20" y="16" width="2" height="2" fill="#000"/><rect x="20" y="18" width="2" height="2" fill="#2a2ae0"/><rect x="20" y="20" width="2" height="2" fill="#000"/><rect x="20" y="22" width="2" height="2" fill="#000"/><rect x="20" y="24" width="2" height="2" fill="#000"/><rect x="20" y="26" width="2" height="2" fill="#000"/><rect x="6" y="0" width="2" height="2" fill="#000"/><rect x="4" y="2" width="2" height="2" fill="#000"/><rect x="6" y="2" width="2" height="2" fill="#000"/><rect x="8" y="2" width="2" height="2" fill="#000"/><rect x="6" y="4" width="2" height="2" fill="#000"/><rect x="8" y="4" width="2" height="2" fill="#000"/><rect x="10" y="4" width="2" height="2" fill="#000"/><rect x="4" y="4" width="2" height="2" fill="#fff"/></svg>
</div>
</body></html>
